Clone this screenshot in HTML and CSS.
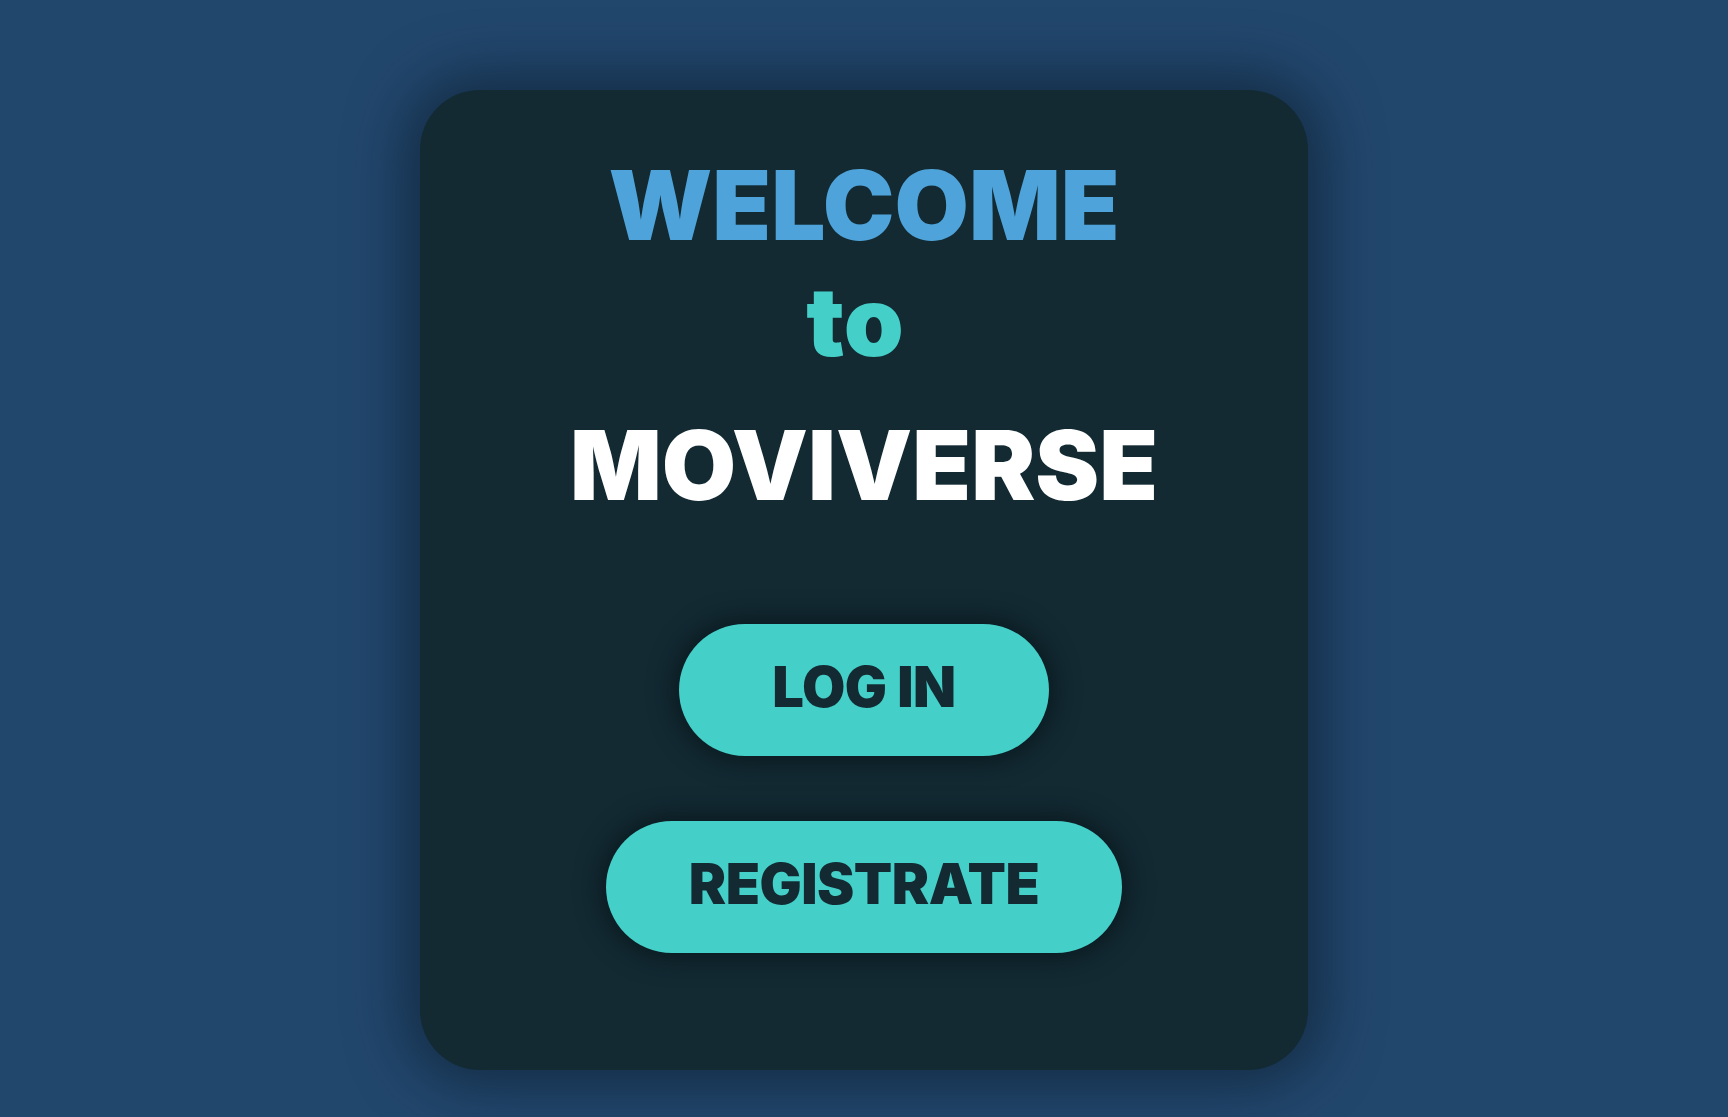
FILE: index.html
```html
<!DOCTYPE html>
<html lang="es">
<head>
<meta charset="utf-8">
<title>Moviverse</title>
<link rel="stylesheet" href="styles.css">
</head>
<body>
  <main class="welcome-card">
    <h1 class="title">
      <span class="title-welcome">WELCOME</span>
      <span class="title-to">to</span>
    </h1>
    <h2 class="brand">MOVIVERSE</h2>
    <div class="actions">
      <button class="pill-btn btn-login" type="button">LOG IN</button>
      <button class="pill-btn btn-register" type="button">REGISTRATE</button>
    </div>
  </main>
</body>
</html>
```

FILE: styles.css
```css
* {
  box-sizing: border-box;
}

html, body {
  margin: 0;
  padding: 0;
}

body {
  min-height: 100vh;
  background: #22476d;
  font-family: Inter, "Noto Sans", sans-serif;
  display: flex;
  justify-content: center;
  align-items: flex-start;
  padding-top: 90px;
  overflow: hidden;
}

.welcome-card {
  width: 888px;
  background: #132a33;
  border-radius: 60px;
  padding: 57px 0 117px;
  display: flex;
  flex-direction: column;
  align-items: center;
  box-shadow: 0 0 55px 16px rgba(12, 28, 45, 0.6);
}

.title,
.brand {
  margin: 0;
  font-size: 96px;
  font-weight: 900;
  line-height: normal;
  text-align: center;
}

.title span {
  display: block;
}

.title-welcome {
  color: #4ea4da;
}

.title-to {
  color: #44d0c8;
  padding-right: 18px;
}

.brand {
  color: #ffffff;
  margin-top: 28px;
}

.actions {
  margin-top: 101px;
  display: flex;
  flex-direction: column;
  align-items: center;
  gap: 65px;
}

.pill-btn {
  border: none;
  background: #44d0c8;
  color: #132a33;
  font-family: Inter, "Noto Sans", sans-serif;
  font-size: 56px;
  font-weight: 900;
  letter-spacing: -0.5px;
  line-height: normal;
  height: 132px;
  padding: 29px 0 35px;
  border-radius: 66px;
  box-shadow: 0 0 24px 6px rgba(5, 15, 20, 0.6);
  cursor: pointer;
}

.btn-login {
  width: 370px;
}

.btn-register {
  width: 516px;
}
```
